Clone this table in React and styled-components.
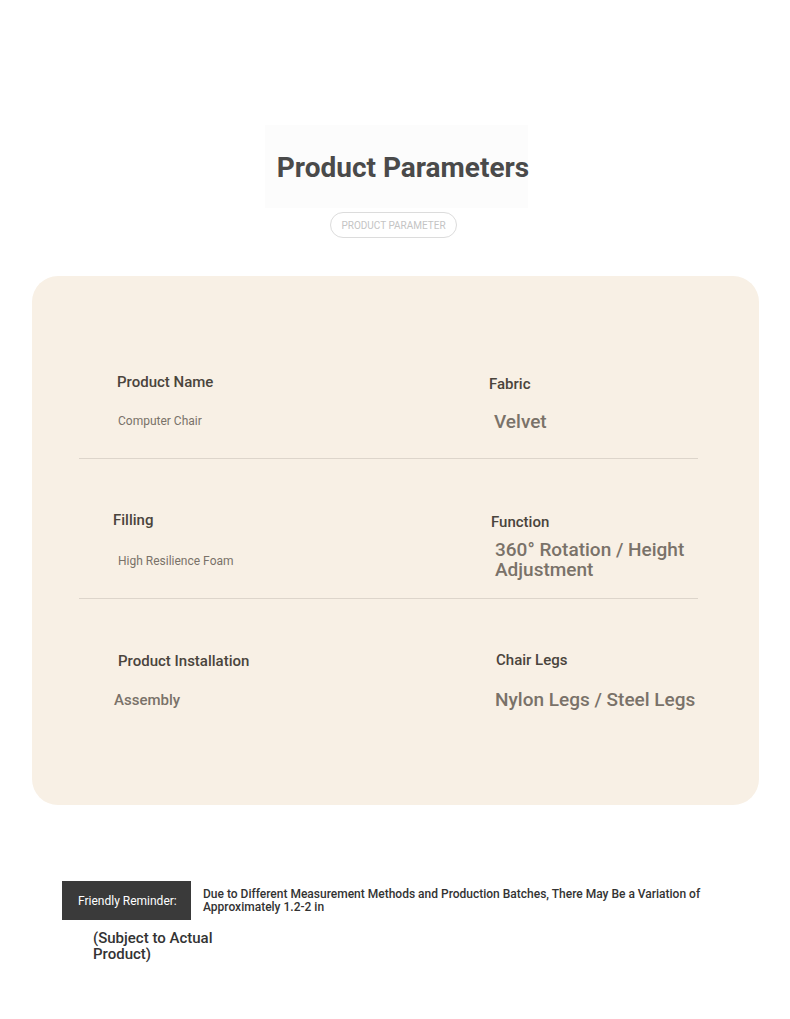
import React from 'react'
import styled, { createGlobalStyle } from 'styled-components';

const GlobalStyle = createGlobalStyle`
  body {
    margin: 0;
    background: #fff;
    font-family: Roboto, "Liberation Sans", sans-serif;
  }
`;

// lx/ly, vx/vy: small nudges of label and value inside each cell
const params = [
  [
    { label: 'Product Name', value: 'Computer Chair', vs: 12, vw: 400, lx: 38, ly: 0, vx: 39, vy: 15 },
    { label: 'Fabric', value: 'Velvet', vs: 19, vw: 500, lx: 0, ly: 2, vx: 5, vy: 14, mb: -2 },
  ],
  [
    { label: 'Filling', value: 'High Resilience Foam', vs: 12, vw: 400, lx: 34, ly: 0, vx: 39, vy: 17 },
    { label: 'Function', value: '360° Rotation / Height Adjustment', vs: 19, vw: 500, lx: 2, ly: 2, vx: 6, vy: 4, mb: -9 },
  ],
  [
    { label: 'Product Installation', value: 'Assembly', vs: 15, vw: 500, lx: 39, ly: 1, vx: 35, vy: 15 },
    { label: 'Chair Legs', value: 'Nylon Legs / Steel Legs', vs: 19, vw: 500, lx: 7, ly: 0, vx: 6, vy: 16 },
  ],
];

function App() {
  return (
    <Page>
      <GlobalStyle />
      <Header>
        <Title>Product Parameters</Title>
        <Pill>PRODUCT PARAMETER</Pill>
      </Header>
      <Card>
        {params.map((row, i) => (
          <Row key={i} $last={i === params.length - 1}>
            {row.map((p) => (
              <Cell key={p.label}>
                <Label $x={p.lx} $y={p.ly}>{p.label}</Label>
                <Value $size={p.vs} $weight={p.vw} $x={p.vx} $y={p.vy} $mb={p.mb || 0}>{p.value}</Value>
              </Cell>
            ))}
          </Row>
        ))}
      </Card>
      <Reminder>
        <ReminderTop>
          <Tag>Friendly Reminder:</Tag>
          <Note>
            Due to Different Measurement Methods and Production Batches, There May Be a Variation of Approximately 1.2-2 in
          </Note>
        </ReminderTop>
        <Subject>(Subject to Actual Product)</Subject>
      </Reminder>
    </Page>
  )
}

const Page = styled.div`
  width: 790px;
  min-height: 1019px;
  padding-top: 125px;
  box-sizing: border-box;
`;

const Header = styled.div`
  display: flex;
  flex-direction: column;
  align-items: center;
`;

const Title = styled.h1`
  margin: 0;
  width: 263px;
  height: 83px;
  margin-left: 3px;
  padding-left: 13px;
  padding-top: 2px;
  box-sizing: border-box;
  display: flex;
  align-items: center;
  justify-content: center;
  background: #fcfcfc;
  font-size: 28px;
  font-weight: 700;
  color: #4a4a4a;
  white-space: nowrap;
`;

const Pill = styled.div`
  margin-top: 4px;
  margin-left: -3px;
  height: 26px;
  padding: 0 10px;
  box-sizing: border-box;
  border: 1px solid #dcdcdc;
  border-radius: 13px;
  display: flex;
  align-items: center;
  font-size: 10px;
  color: #c4c4c4;
`;

const Card = styled.div`
  margin: 38px 31px 0 32px;
  background: #f8f0e5;
  border-radius: 26px;
  padding: 45px 61px 68px 47px;
`;

const Row = styled.div`
  display: grid;
  grid-template-columns: 410px 1fr;
  padding: 47px 0 27px;
  border-bottom: ${(p) => (p.$last ? 'none' : '1px solid #ddd5cb')};
`;

const Cell = styled.div`
  display: flex;
  flex-direction: column;
  align-items: flex-start;
`;

const Label = styled.div`
  margin: ${(p) => p.$y}px 0 0 ${(p) => p.$x}px;
  font-size: 15px;
  line-height: 28px;
  font-weight: 500;
  color: #4a443c;
  white-space: nowrap;
`;

const Value = styled.div`
  margin: ${(p) => p.$y}px 0 ${(p) => p.$mb}px ${(p) => p.$x}px;
  font-size: ${(p) => p.$size}px;
  line-height: 20px;
  font-weight: ${(p) => p.$weight};
  color: #7a7269;
  max-width: 205px;
  white-space: ${(p) => (p.$size > 17 ? 'normal' : 'nowrap')};
`;

const Reminder = styled.div`
  margin: 76px 0 0 62px;
`;

const ReminderTop = styled.div`
  display: flex;
  align-items: center;
  gap: 12px;
`;

const Tag = styled.div`
  width: 129px;
  height: 39px;
  box-sizing: border-box;
  padding-left: 16px;
  display: flex;
  align-items: center;
  background: #3a3a3a;
  color: #fff;
  font-size: 12px;
  font-weight: 400;
  flex-shrink: 0;
`;

const Note = styled.div`
  width: 517px;
  font-size: 12px;
  line-height: 13px;
  font-weight: 500;
  color: #333;
`;

const Subject = styled.div`
  margin: 10px 0 0 31px;
  width: 140px;
  font-size: 15px;
  line-height: 16px;
  font-weight: 500;
  color: #333;
`;

export default App;
